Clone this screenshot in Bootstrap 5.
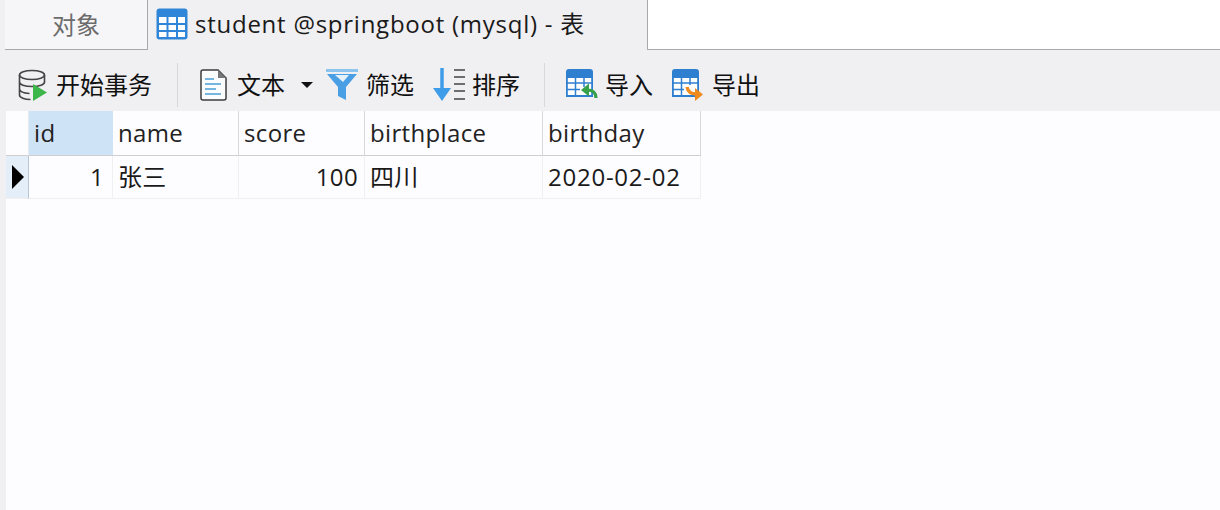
<!DOCTYPE html>
<html lang="zh">
<head>
  <meta charset="UTF-8" />
  <meta name="viewport" content="width=device-width, initial-scale=1" />
  <title>student @springboot (mysql) - 表</title>
  <link href="https://cdn.jsdelivr.net/npm/bootstrap@5.3.3/dist/css/bootstrap.min.css" rel="stylesheet" />
  <style>
    html, body { height: 100%; }
    body {
      background: #f0eff1;
      font-family: "Open Sans", "Noto Sans CJK SC", sans-serif;
      font-size: 24px;
      color: #1a1a1a;
      overflow: hidden;
    }
    .tab-strip { height: 50px; padding-left: 5px; }
    .tab-item {
      height: 50px;
      white-space: nowrap;
      line-height: 1;
    }
    .tab-objects {
      width: 143px;
      background: #f6f5f7;
      border-right: 1px solid #a9a9a9;
      border-bottom: 1px solid #a9a9a9;
      color: #6c6c6c;
      font-size: 24px;
      justify-content: center;
    }
    .tab-active {
      width: 500px;
      padding: 0 0 2px 8px;
      gap: 7px;
      border-right: 1px solid #a9a9a9;
      letter-spacing: .75px;
    }
    .tab-rest {
      background: #fff;
      border-bottom: 1px solid #a9a9a9;
    }
    .tool-bar { height: 61px; padding: 8px 0 0 18px; }
    .tool-btn { font-size: 24px; line-height: 1; white-space: nowrap; color: #111; }
    .tool-sep { width: 1px; height: 44px; background: #d8d7d9; }
    .sep-first { margin: 0 22px 0 25px; }
    .sep-second { margin: 0 20px 0 24px; }
    .drop-arrow {
      width: 0;
      height: 0;
      margin-left: 16px;
      border-left: 6px solid transparent;
      border-right: 6px solid transparent;
      border-top: 6px solid #111;
    }
    .btn-filter { margin-left: 13px; }
    .btn-sort { margin-left: 19px; }
    .btn-export { margin-left: 18px; }
    .label-doc { margin-left: 10px; }
    .label-gap { margin-left: 7px; }
    .label-wide { margin-left: 8px; }
    .grid-area { background: #fdfcfe; margin-left: 6px; height: 399px; }
    .grid-row { width: 695px; }
    .grid-cell {
      padding: 0 5px;
      border-right: 1px solid #f0f0f2;
      border-bottom: 1px solid #efeff1;
      font-size: 24px;
      line-height: 1;
      white-space: nowrap;
      letter-spacing: .35px;
    }
    .grid-head .grid-cell { height: 45px; border-bottom: 1px solid #cfcfd1; border-right-color: #d8d8da; color: #222; }
    .grid-body .grid-cell { height: 43px; }
    .grid-cell.col-mark { width: 23px; padding: 0 0 0 1px; }
    .col-id { width: 84px; }
    .grid-head .col-id { border-right: 0; }
    .col-name { width: 126px; }
    .col-score { width: 126px; }
    .col-place { width: 178px; }
    .col-day { width: 158px; }
    .cell-selected { background: #cfe3f6; }
    .grid-body .col-mark { background: #e3eef8; border-right: 1px solid #b9c6d2; }
    .grid-head .col-mark { border-right: 1px solid #e6e9ee; }
    .grid-body .col-id { padding-right: 8px; }
    .grid-body .col-score { padding-right: 6px; }
    .grid-body .col-day { letter-spacing: .75px; }
    .row-arrow {
      width: 0;
      height: 0;
      border-top: 12px solid transparent;
      border-bottom: 12px solid transparent;
      border-left: 12px solid #000;
    }
  </style>
</head>
<body>

  <div class="d-flex tab-strip">
    <div class="tab-item tab-objects d-flex align-items-center">对象</div>
    <div class="tab-item tab-active d-flex align-items-center">
      <svg width="32" height="32" viewBox="0 0 32 32">
        <rect x="0.5" y="0.5" width="31" height="31" rx="3" fill="#2f86d8"/>
        <rect x="3" y="9" width="7.5" height="6" fill="#fff"/>
        <rect x="12.5" y="9" width="7.5" height="6" fill="#fff"/>
        <rect x="22" y="9" width="7" height="6" fill="#fff"/>
        <rect x="3" y="17" width="7.5" height="5" fill="#fff"/>
        <rect x="12.5" y="17" width="7.5" height="5" fill="#fff"/>
        <rect x="22" y="17" width="7" height="5" fill="#fff"/>
        <rect x="3" y="24" width="7.5" height="5" fill="#fff"/>
        <rect x="12.5" y="24" width="7.5" height="5" fill="#fff"/>
        <rect x="22" y="24" width="7" height="5" fill="#fff"/>
      </svg>
      <span>student @springboot (mysql) - 表</span>
    </div>
    <div class="tab-item tab-rest flex-grow-1"></div>
  </div>

  <div class="d-flex align-items-center tool-bar">
    <div class="tool-btn d-flex align-items-center gap-2">
      <svg width="30" height="32" viewBox="0 0 30 32" fill="none" stroke="#444" stroke-width="1.6">
        <ellipse cx="14" cy="6" rx="12.5" ry="4.5"/>
        <path d="M1.5 6v20c0 2.500 5 4.500 11 4.500M26.500 6v8M1.500 13c0 2.500 5 4.500 12.500 4.500S26.500 15.500 26.500 13M1.500 20c0 2.500 4 4 10 4.500"/>
        <path d="M15 15l14 8.500-14 8.500z" fill="#3cb54a" stroke="none"/>
      </svg>
      <span>开始事务</span>
    </div>
    <div class="tool-sep sep-first"></div>
    <div class="tool-btn d-flex align-items-center">
      <svg width="27" height="32" viewBox="0 0 27 32">
        <path d="M1 3a2 2 0 0 1 2-2h15l8 8v20a2 2 0 0 1-2 2H3a2 2 0 0 1-2-2z" fill="#fafcfd" stroke="#3c3c3c" stroke-width="1.500"/>
        <path d="M18 1l8 8h-8z" fill="#777"/>
        <path d="M5 10h9M5 15h16M5 20h11M5 25h16" stroke="#4a9ed8" stroke-width="1.600"/>
      </svg>
      <span class="label-doc">文本</span>
      <span class="drop-arrow"></span>
    </div>
    <div class="tool-btn btn-filter d-flex align-items-center">
      <svg width="32" height="32" viewBox="0 0 32 32">
        <path d="M0 0h32v3H0z" fill="#8cc4ee"/>
        <path d="M1 5h30L20 18v13l-8-4v-9z" fill="#4a9fe4"/>
        <path d="M9 6h14l-6 7z" fill="#e6f1fa"/>
      </svg>
      <span class="label-wide">筛选</span>
    </div>
    <div class="tool-btn btn-sort d-flex align-items-center">
      <svg width="32" height="34" viewBox="0 0 32 34">
        <path d="M9 0v24" stroke="#3f9ce8" stroke-width="3.500"/>
        <path d="M0 20h18l-9 13z" fill="#3f9ce8"/>
        <path d="M21 2h11M21 9h11M21 16h11M21 23h11M21 31h11" stroke="#444" stroke-width="1.600"/>
      </svg>
      <span class="label-gap">排序</span>
    </div>
    <div class="tool-sep sep-second"></div>
    <div class="tool-btn d-flex align-items-center">
      <svg width="33" height="34" viewBox="0 0 33 34">
        <path d="M1 4a3 3 0 0 1 3-3h21a3 3 0 0 1 3 3v5H1z" fill="#2f7fd0"/>
        <path d="M1.900 9h25.200v19H1.900z" fill="#fff" stroke="#2f7fd0" stroke-width="1.800"/>
        <path d="M10.500 9v19M19 9v10M1 15h27M1 21.500h14" stroke="#2f7fd0" stroke-width="1.500"/>
        <path d="M31 30c0-5-3-8-9-8" fill="none" stroke="#37a04a" stroke-width="3.200"/>
        <path d="M24 15.500v13l-8-6.500z" fill="#37a04a"/>
      </svg>
      <span class="label-gap">导入</span>
    </div>
    <div class="tool-btn btn-export d-flex align-items-center">
      <svg width="33" height="34" viewBox="0 0 33 34">
        <path d="M1 4a3 3 0 0 1 3-3h21a3 3 0 0 1 3 3v5H1z" fill="#2f7fd0"/>
        <path d="M1.900 9h25.200v19H1.900z" fill="#fff" stroke="#2f7fd0" stroke-width="1.800"/>
        <path d="M10.500 9v19M19 9v8M1 15h27M1 21.500h12" stroke="#2f7fd0" stroke-width="1.500"/>
        <path d="M16 19c1 5 4 7 9 7" fill="none" stroke="#f08a1d" stroke-width="3.400"/>
        <path d="M24 20l8 6.500-8 6.500z" fill="#f08a1d"/>
      </svg>
      <span class="label-wide">导出</span>
    </div>
  </div>

  <div class="grid-area">
    <div class="d-flex grid-row grid-head">
      <div class="grid-cell col-mark"></div>
      <div class="grid-cell col-id cell-selected d-flex align-items-center">id</div>
      <div class="grid-cell col-name d-flex align-items-center">name</div>
      <div class="grid-cell col-score d-flex align-items-center">score</div>
      <div class="grid-cell col-place d-flex align-items-center">birthplace</div>
      <div class="grid-cell col-day d-flex align-items-center">birthday</div>
    </div>
    <div class="d-flex grid-row grid-body">
      <div class="grid-cell col-mark d-flex align-items-center justify-content-center"><span class="row-arrow"></span></div>
      <div class="grid-cell col-id d-flex align-items-center justify-content-end">1</div>
      <div class="grid-cell col-name d-flex align-items-center">张三</div>
      <div class="grid-cell col-score d-flex align-items-center justify-content-end">100</div>
      <div class="grid-cell col-place d-flex align-items-center">四川</div>
      <div class="grid-cell col-day d-flex align-items-center">2020-02-02</div>
    </div>
  </div>

  <script src="https://cdn.jsdelivr.net/npm/bootstrap@5.3.3/dist/js/bootstrap.bundle.min.js"></script>
</body>
</html>
